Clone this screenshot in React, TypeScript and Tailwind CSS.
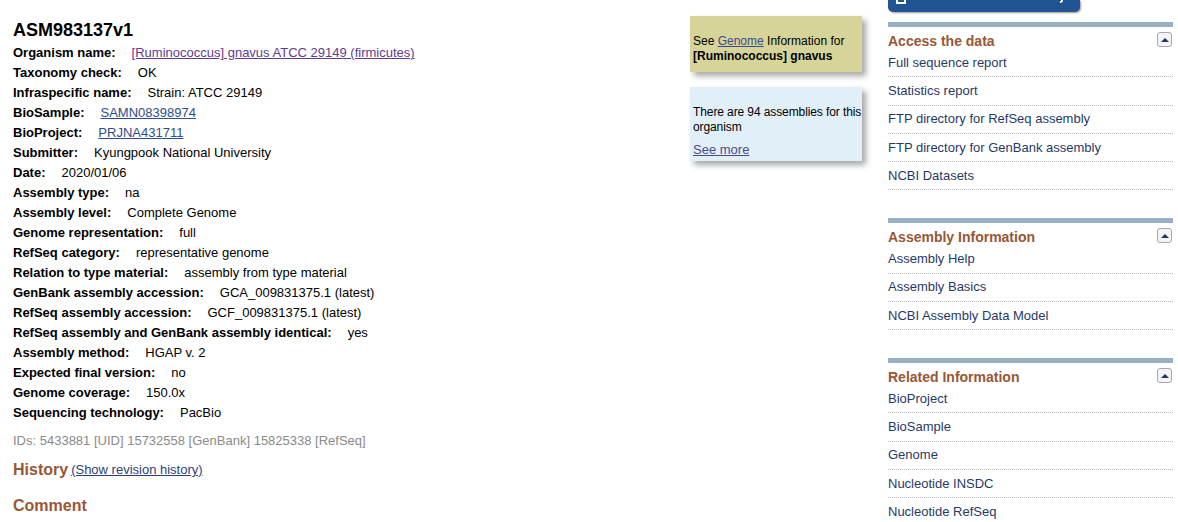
import React from 'react';

// ── Data ──────────────────────────────────────────────────────

type Row = { label: string; value: string; href?: 'visited' | 'link' };

const ROWS: Row[] = [
  { label: 'Organism name:', value: '[Ruminococcus] gnavus ATCC 29149 (firmicutes)', href: 'visited' },
  { label: 'Taxonomy check:', value: 'OK' },
  { label: 'Infraspecific name:', value: 'Strain: ATCC 29149' },
  { label: 'BioSample:', value: 'SAMN08398974', href: 'link' },
  { label: 'BioProject:', value: 'PRJNA431711', href: 'link' },
  { label: 'Submitter:', value: 'Kyungpook National University' },
  { label: 'Date:', value: '2020/01/06' },
  { label: 'Assembly type:', value: 'na' },
  { label: 'Assembly level:', value: 'Complete Genome' },
  { label: 'Genome representation:', value: 'full' },
  { label: 'RefSeq category:', value: 'representative genome' },
  { label: 'Relation to type material:', value: 'assembly from type material' },
  { label: 'GenBank assembly accession:', value: 'GCA_009831375.1 (latest)' },
  { label: 'RefSeq assembly accession:', value: 'GCF_009831375.1 (latest)' },
  { label: 'RefSeq assembly and GenBank assembly identical:', value: 'yes' },
  { label: 'Assembly method:', value: 'HGAP v. 2' },
  { label: 'Expected final version:', value: 'no' },
  { label: 'Genome coverage:', value: '150.0x' },
  { label: 'Sequencing technology:', value: 'PacBio' },
];

const SECTIONS: { title: string; links: string[] }[] = [
  {
    title: 'Access the data',
    links: ['Full sequence report', 'Statistics report', 'FTP directory for RefSeq assembly', 'FTP directory for GenBank assembly', 'NCBI Datasets'],
  },
  { title: 'Assembly Information', links: ['Assembly Help', 'Assembly Basics', 'NCBI Assembly Data Model'] },
  { title: 'Related Information', links: ['BioProject', 'BioSample', 'Genome', 'Nucleotide INSDC', 'Nucleotide RefSeq'] },
];

// ── Sidebar portlet ───────────────────────────────────────────

function Portlet({ title, links }: { title: string; links: string[] }) {
  return (
    <div className="mb-[28px]">
      <div className="h-[5px] bg-[#97b0c8]" />
      <div className="relative pt-[6px] h-[22px]">
        <h3 className="text-[14px] leading-[16px] font-bold text-[#985735]">{title}</h3>
        <button className="absolute right-[1px] top-[5px] w-[15px] h-[15px] rounded-[3px] border border-[#a8a8a8] bg-[#f4f4f4] flex items-center justify-center">
          <span className="block w-0 h-0 border-l-[4px] border-r-[4px] border-b-[4px] border-l-transparent border-r-transparent border-b-[#1c3866]" />
        </button>
      </div>
      <ul>
        {links.map(l => (
          <li key={l} className="h-[28.25px] flex items-center border-b border-dotted border-[#bbbbbb]">
            <a className="text-[13px] text-[#1f3a68] cursor-pointer">{l}</a>
          </li>
        ))}
      </ul>
    </div>
  );
}

// ── Page ──────────────────────────────────────────────────────

export default function App() {
  return (
    <div className="w-[1178px] h-[522px] overflow-hidden bg-white flex text-black font-['Liberation_Sans',Arial,sans-serif]">
      {/* Main summary */}
      <div className="flex-1 pl-[13px] pt-[18px]">
        <h1 className="text-[18px] leading-[24px] font-bold mb-[1px]">ASM983137v1</h1>
        <dl className="text-[13px]">
          {ROWS.map(r => (
            <div key={r.label} className="h-[20px] flex items-center whitespace-nowrap">
              <dt className="font-bold mr-[16px]">{r.label}</dt>
              <dd>
                {r.href === 'visited' ? (
                  <a className="underline text-[#5f3b91] cursor-pointer">{r.value}</a>
                ) : r.href === 'link' ? (
                  <a className="underline text-[#2f4c8c] cursor-pointer">{r.value}</a>
                ) : (
                  r.value
                )}
              </dd>
            </div>
          ))}
        </dl>
        <p className="mt-[8px] h-[20px] leading-[20px] text-[13px] text-[#8a8a8a]">
          IDs: 5433881 [UID] 15732558 [GenBank] 15825338 [RefSeq]
        </p>
        <div className="mt-[8px] h-[22px] flex items-center">
          <h2 className="text-[16px] font-bold text-[#985735]">History</h2>
          <a className="ml-[3px] text-[13px] text-[#2b3f7c] underline cursor-pointer">(Show revision history)</a>
        </div>
        <h2 className="mt-[14px] h-[22px] leading-[22px] text-[16px] font-bold text-[#985735]">Comment</h2>
      </div>

      {/* Discovery boxes */}
      <div className="w-[172px] pt-[16px] text-[12px]">
        <div className="bg-[#d6d498] pt-[18px] pb-[8px] px-[3px] leading-[15px] whitespace-nowrap shadow-[4px_4px_6px_rgba(0,0,0,0.35)]">
          See <a className="underline text-[#3a4b93] cursor-pointer">Genome</a> Information for
          <br />
          <b>[Ruminococcus] gnavus</b>
        </div>
        <div className="mt-[15px] bg-[#e1f0f8] pt-[18px] pb-[3px] pl-[3px] leading-[15px] whitespace-nowrap tracking-[-0.1px] shadow-[4px_4px_6px_rgba(0,0,0,0.35)]">
          <p>
            There are 94 assemblies for this
            <br />
            organism
          </p>
          <a className="block mt-[7px] text-[13px] leading-[16px] tracking-normal underline text-[#4b4b8c] cursor-pointer">See more</a>
        </div>
      </div>

      {/* Sidebar */}
      <div className="w-[285px] ml-[26px] mr-[5px]">
        <div className="w-[192px] h-[12px] rounded-b-[5px] bg-[#205493] shadow-[1px_1px_2px_rgba(0,0,0,0.4)] relative mb-[10px]">
          <span className="absolute left-[8px] top-0 w-[10px] h-[4px] border-l-2 border-r-2 border-b-2 border-white" />
          <span className="absolute left-[172px] top-0 w-[3px] h-[3px] border-r-2 border-b-2 border-white rounded-br-[3px]" />
        </div>
        {SECTIONS.map(s => (
          <Portlet key={s.title} title={s.title} links={s.links} />
        ))}
      </div>
    </div>
  );
}
